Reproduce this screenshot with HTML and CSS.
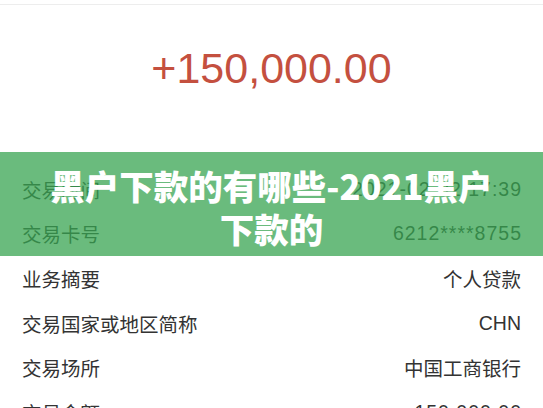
FILE: index.html
```html
<!DOCTYPE html>
<html lang="zh-CN">
<head>
    <meta charset="UTF-8">
    <meta name="viewport" content="width=device-width, initial-scale=1.0">
    <title>黑户下款的有哪些</title>
    <link rel="stylesheet" href="styles.css">
</head>
<body>

    <div class="top-bar"></div>

    <div class="detail">
        <div class="amount">+150,000.00</div>

        <div class="rows">
            <div class="row"><span>交易时间</span><span class="num">2021-02-02 17:39</span></div>
            <div class="row"><span>交易卡号</span><span class="num">6212****8755</span></div>
            <div class="row"><span>业务摘要</span><span>个人贷款</span></div>
            <div class="row"><span>交易国家或地区简称</span><span>CHN</span></div>
            <div class="row"><span>交易场所</span><span>中国工商银行</span></div>
            <div class="row"><span>交易金额</span><span class="num">150,000.00</span></div>
        </div>

        <!-- 标题横幅 -->
        <div class="banner">黑户下款的有哪些-2021黑户下款的</div>
    </div>

</body>
</html>
```

FILE: styles.css
```css
/* CSS */
body {
    margin: 0;
    background-color: #fff;
    font-family: "Liberation Sans", "Noto Sans CJK SC", sans-serif;
    color: #333;
    overflow: hidden;
}

.top-bar {
    height: 4px;
    border-bottom: 1px solid #ededed;
}

.detail {
    position: relative;
}

.amount {
    text-align: center;
    font-size: 43px;
    line-height: 52px;
    padding: 37px 0 73px;
    color: #c4503f;
}

.row {
    display: flex;
    justify-content: space-between;
    align-items: center;
    height: 44.6px;
    padding: 0 22px;
    font-size: 19.5px;
    color: #333;
}

.num {
    letter-spacing: 1px;
    margin-right: -1px;
}

.banner {
    position: absolute;
    left: 0;
    right: 0;
    top: 147px;
    height: 104px;
    box-sizing: border-box;
    padding: 12px 45px 0;
    background-color: rgba(56, 164, 82, 0.75);
    color: #fff;
    font-family: "Noto Sans CJK SC", sans-serif;
    font-weight: 900;
    font-size: 34.5px;
    line-height: 43px;
    text-align: center;
}
```
